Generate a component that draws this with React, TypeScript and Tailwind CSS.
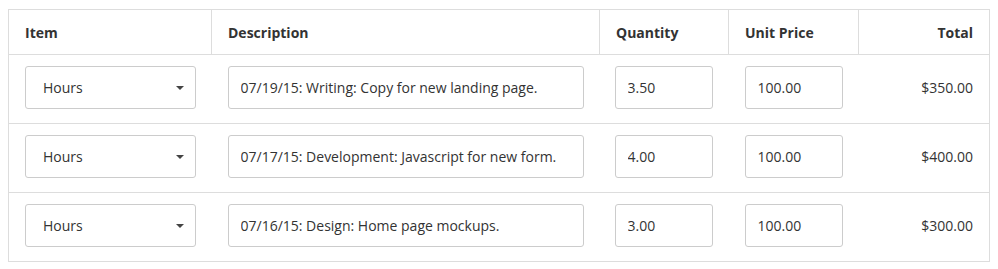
const rows = [
  { desc: "07/19/15: Writing: Copy for new landing page.", qty: "3.50", price: "100.00", total: "$350.00" },
  { desc: "07/17/15: Development: Javascript for new form.", qty: "4.00", price: "100.00", total: "$400.00" },
  { desc: "07/16/15: Design: Home page mockups.", qty: "3.00", price: "100.00", total: "$300.00" },
];

const inputCls =
  "block w-full h-[43px] rounded-[3px] border border-[#cccccc] bg-white px-3 text-[14px] text-[#333] outline-none";

export default function App() {
  return (
    <div className="bg-white w-[998px] h-[269px] pt-[9px] pl-[8px] font-['Open_Sans',sans-serif] text-[#333]">
      <table className="w-[981px] table-fixed border-collapse border border-[#dddddd]">
        <colgroup>
          <col className="w-[203px]" />
          <col className="w-[388px]" />
          <col className="w-[129px]" />
          <col className="w-[130px]" />
          <col className="w-[131px]" />
        </colgroup>
        <thead>
          <tr className="h-[45px] text-[14px] font-bold">
            <th className="border border-[#dddddd] px-4 text-left">Item</th>
            <th className="border border-[#dddddd] px-4 text-left">Description</th>
            <th className="border border-[#dddddd] px-4 text-left">Quantity</th>
            <th className="border border-[#dddddd] px-4 text-left">Unit Price</th>
            <th className="border border-[#dddddd] px-4 text-right">Total</th>
          </tr>
        </thead>
        <tbody>
          {rows.map((r, i) => (
            <tr key={i} className="border-t border-[#dddddd]">
              <td className="px-4 pt-[11px] pb-[14px] align-top">
                <div className="flex h-[43px] items-center justify-between rounded-[3px] border border-[#cccccc] pl-[17px] pr-[11px] text-[14px]">
                  <span>Hours</span>
                  <svg width="8" height="4" viewBox="0 0 8 4">
                    <path d="M0 0h8L4 4z" fill="#444" />
                  </svg>
                </div>
              </td>
              <td className="px-4 pt-[11px] pb-[14px] align-top">
                <input className={inputCls} defaultValue={r.desc} />
              </td>
              <td className="pl-[15px] pr-4 pt-[11px] pb-[14px] align-top">
                <input className={inputCls} defaultValue={r.qty} />
              </td>
              <td className="px-4 pt-[11px] pb-[14px] align-top">
                <input className={inputCls} defaultValue={r.price} />
              </td>
              <td className="px-4 pt-[11px] pb-[14px] align-top text-right text-[14px]">
                <div className="flex h-[43px] items-center justify-end">{r.total}</div>
              </td>
            </tr>
          ))}
        </tbody>
      </table>
    </div>
  );
}
